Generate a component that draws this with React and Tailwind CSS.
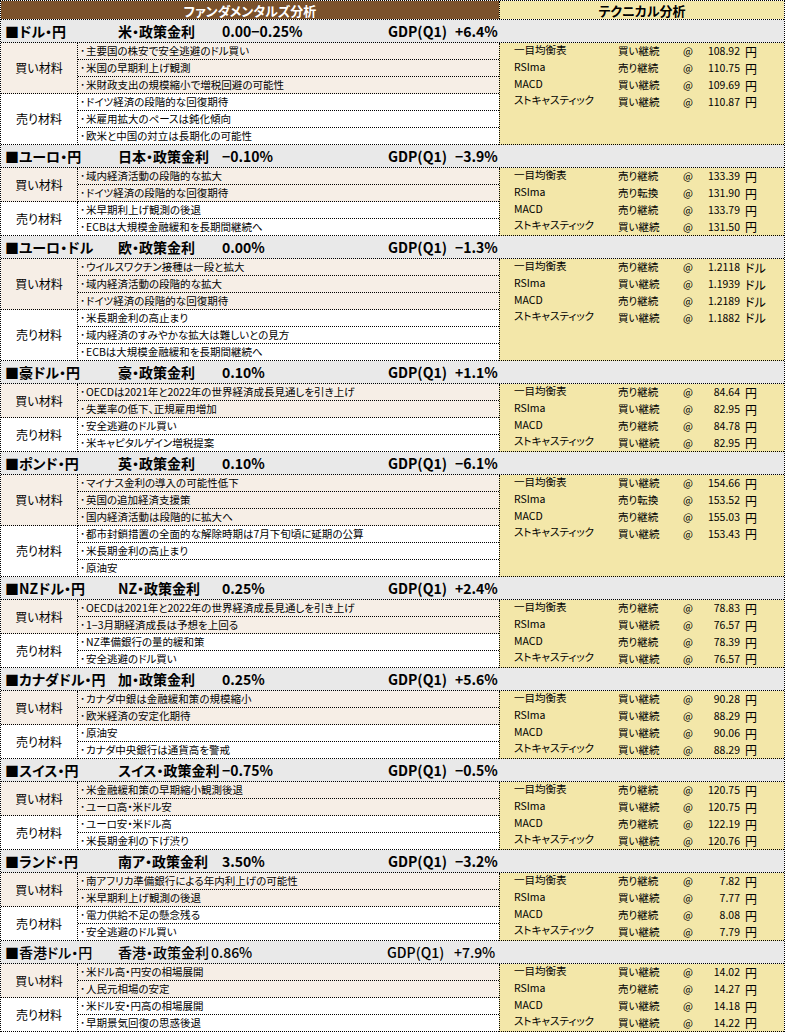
import React from 'react'

const techNames = ['一目均衡表', 'RSIma', 'MACD', 'ストキャスティック']

const sections = [
  {
    pair: '■ドル・円', policy: '米・政策金利', rate: '0.00−0.25%', gdp: '+6.4%', unit: '円',
    buy: ['主要国の株安で安全逃避のドル買い', '米国の早期利上げ観測', '米財政支出の規模縮小で増税回避の可能性'],
    sell: ['ドイツ経済の段階的な回復期待', '米雇用拡大のペースは鈍化傾向', '欧米と中国の対立は長期化の可能性'],
    tech: [['買い継続', '108.92'], ['売り継続', '110.75'], ['買い継続', '109.69'], ['買い継続', '110.87']],
  },
  {
    pair: '■ユーロ・円', policy: '日本・政策金利', rate: '−0.10%', gdp: '−3.9%', unit: '円',
    buy: ['域内経済活動の段階的な拡大', 'ドイツ経済の段階的な回復期待'],
    sell: ['米早期利上げ観測の後退', 'ECBは大規模金融緩和を長期間継続へ'],
    tech: [['売り継続', '133.39'], ['売り転換', '131.90'], ['売り継続', '133.79'], ['買い継続', '131.50']],
  },
  {
    pair: '■ユーロ・ドル', policy: '欧・政策金利', rate: '0.00%', gdp: '−1.3%', unit: 'ドル',
    buy: ['ウイルスワクチン接種は一段と拡大', '域内経済活動の段階的な拡大', 'ドイツ経済の段階的な回復期待'],
    sell: ['米長期金利の高止まり', '域内経済のすみやかな拡大は難しいとの見方', 'ECBは大規模金融緩和を長期間継続へ'],
    tech: [['売り継続', '1.2118'], ['買い継続', '1.1939'], ['売り継続', '1.2189'], ['買い継続', '1.1882']],
  },
  {
    pair: '■豪ドル・円', policy: '豪・政策金利', rate: '0.10%', gdp: '+1.1%', unit: '円',
    buy: ['OECDは2021年と2022年の世界経済成長見通しを引き上げ', '失業率の低下、正規雇用増加'],
    sell: ['安全逃避のドル買い', '米キャピタルゲイン増税提案'],
    tech: [['売り継続', '84.64'], ['買い継続', '82.95'], ['売り継続', '84.78'], ['買い継続', '82.95']],
  },
  {
    pair: '■ポンド・円', policy: '英・政策金利', rate: '0.10%', gdp: '−6.1%', unit: '円',
    buy: ['マイナス金利の導入の可能性低下', '英国の追加経済支援策', '国内経済活動は段階的に拡大へ'],
    sell: ['都市封鎖措置の全面的な解除時期は7月下旬頃に延期の公算', '米長期金利の高止まり', '原油安'],
    tech: [['買い継続', '154.66'], ['売り転換', '153.52'], ['売り継続', '155.03'], ['買い継続', '153.43']],
  },
  {
    pair: '■NZドル・円', policy: 'NZ・政策金利', rate: '0.25%', gdp: '+2.4%', unit: '円',
    buy: ['OECDは2021年と2022年の世界経済成長見通しを引き上げ', '1−3月期経済成長は予想を上回る'],
    sell: ['NZ準備銀行の量的緩和策', '安全逃避のドル買い'],
    tech: [['売り継続', '78.83'], ['買い継続', '76.57'], ['売り継続', '78.39'], ['買い継続', '76.57']],
  },
  {
    pair: '■カナダドル・円', policy: '加・政策金利', rate: '0.25%', gdp: '+5.6%', unit: '円',
    buy: ['カナダ中銀は金融緩和策の規模縮小', '欧米経済の安定化期待'],
    sell: ['原油安', 'カナダ中央銀行は通貨高を警戒'],
    tech: [['買い継続', '90.28'], ['買い継続', '88.29'], ['買い継続', '90.06'], ['買い継続', '88.29']],
  },
  {
    pair: '■スイス・円', policy: 'スイス・政策金利', rate: '−0.75%', gdp: '−0.5%', unit: '円',
    buy: ['米金融緩和策の早期縮小観測後退', 'ユーロ高・米ドル安'],
    sell: ['ユーロ安・米ドル高', '米長期金利の下げ渋り'],
    tech: [['売り継続', '120.75'], ['買い継続', '120.75'], ['売り継続', '122.19'], ['買い継続', '120.76']],
  },
  {
    pair: '■ランド・円', policy: '南ア・政策金利', rate: '3.50%', gdp: '−3.2%', unit: '円',
    buy: ['南アフリカ準備銀行による年内利上げの可能性', '米早期利上げ観測の後退'],
    sell: ['電力供給不足の懸念残る', '安全逃避のドル買い'],
    tech: [['売り継続', '7.82'], ['買い継続', '7.77'], ['売り継続', '8.08'], ['買い継続', '7.79']],
  },
  {
    pair: '■香港ドル・円', policy: '香港・政策金利', rate: '0.86%', gdp: '+7.9%', unit: '円', thin: true,
    buy: ['米ドル高・円安の相場展開', '人民元相場の安定'],
    sell: ['米ドル安・円高の相場展開', '早期景気回復の思惑後退'],
    tech: [['買い継続', '14.02'], ['売り継続', '14.27'], ['買い継続', '14.18'], ['買い継続', '14.22']],
  },
]

function Group({ label, items, bg }) {
  return (
    <div className={`flex ${bg}`}>
      <div className="w-[77px] shrink-0 flex items-center justify-center border-r border-b border-dotted border-black text-[12px] leading-none">
        {label}
      </div>
      <div className="flex-1 min-w-0">
        {items.map((t, i) => (
          <div key={i} className="h-[17px] flex items-center border-b border-dotted border-black pl-[2px] text-[10.5px] leading-none whitespace-nowrap">
            <span className="w-[6px] shrink-0">･</span>
            {t}
          </div>
        ))}
      </div>
    </div>
  )
}

function Section({ s }) {
  return (
    <div>
      <div
        className={`h-[23px] flex items-center border-b border-dotted border-black bg-[#e9e9e9] pl-[4px] text-[14px] leading-none whitespace-nowrap ${
          s.thin ? 'font-medium' : 'font-bold'
        }`}
      >
        <span className="w-[113px] shrink-0">{s.pair}</span>
        <span className={s.thin ? 'w-[93px] shrink-0' : 'w-[104px] shrink-0'}>{s.policy}</span>
        <span className={s.thin ? 'w-[176px] shrink-0' : 'w-[166px] shrink-0'}>{s.rate}</span>
        <span className="w-[67px] shrink-0">GDP(Q1)</span>
        <span>{s.gdp}</span>
      </div>
      <div className="flex">
        <div className="w-[498px] shrink-0">
          <Group label="買い材料" items={s.buy} bg="bg-[#f6eee6]" />
          <Group label="売り材料" items={s.sell} bg="bg-white" />
        </div>
        <div className="flex-1 bg-[#f3e7a9] border-l border-b border-dotted border-black text-[10.5px] leading-none">
          {s.tech.map(([sig, val], i) => (
            <div key={i} className="h-[17px] last:h-[16px] flex items-center pl-[14px] whitespace-nowrap">
              <span className="w-[104px] shrink-0 -mt-[3px]">{techNames[i]}</span>
              <span className="w-[65px] shrink-0">{sig}</span>
              <span className="w-[12px] shrink-0">@</span>
              <span className="w-[45px] shrink-0 text-right">{val}</span>
              <span className="ml-[5px] text-[12px]">{s.unit}</span>
            </div>
          ))}
        </div>
      </div>
    </div>
  )
}

export default function App() {
  return (
    <div className="w-[786px] bg-white text-black font-['Noto_Sans_CJK_JP',sans-serif] [font-feature-settings:'palt']">
      <div className="w-[785px] border-l border-r border-t border-dotted border-black">
        <div className="flex h-[19px] border-b border-dotted border-black text-[13px] font-bold leading-none">
          <div className="w-[498px] shrink-0 bg-[#7b522c] text-white flex items-center justify-center">
            ファンダメンタルズ分析
          </div>
          <div className="flex-1 bg-[#f3e7a9] border-l border-dotted border-black flex items-center justify-center">
            テクニカル分析
          </div>
        </div>
        {sections.map((s, i) => (
          <Section key={i} s={s} />
        ))}
      </div>
    </div>
  )
}
